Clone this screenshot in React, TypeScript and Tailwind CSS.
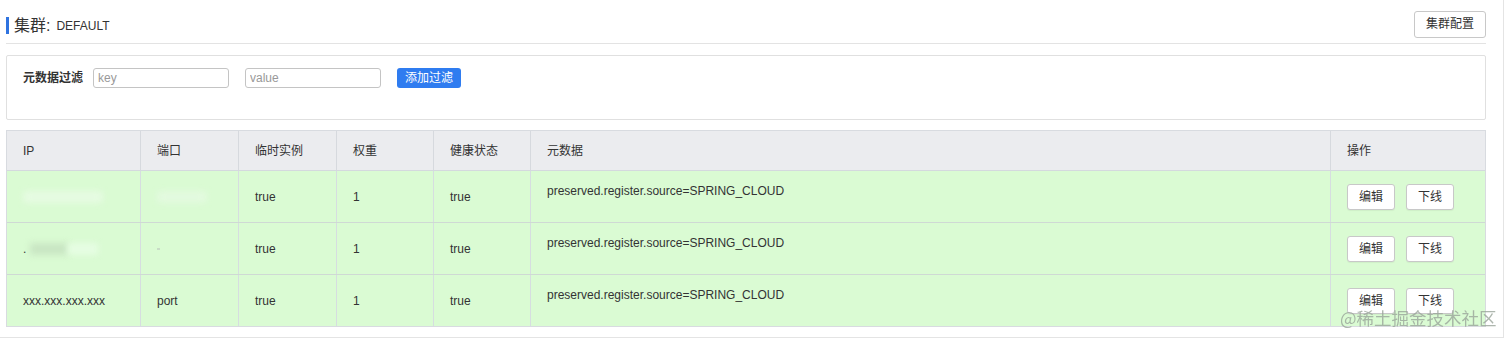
import React from "react";

const font = { fontFamily: '"Liberation Sans", "Noto Sans CJK SC", sans-serif' };

const cols = [
  { label: "IP", w: "w-[134px]" },
  { label: "端口", w: "w-[98px]" },
  { label: "临时实例", w: "w-[98px]" },
  { label: "权重", w: "w-[97px]" },
  { label: "健康状态", w: "w-[97px]" },
  { label: "元数据", w: "w-[800px]" },
  { label: "操作", w: "flex-1" },
];

function Btn({ children }: { children: React.ReactNode }) {
  return (
    <button className="h-[26px] w-[48px] rounded-[3px] border border-[#c8c8c8] bg-white text-[12px] text-[#333] shadow-[0_1px_1px_rgba(0,0,0,0.05)]">
      {children}
    </button>
  );
}

function Row({ ip, port, last }: { ip: React.ReactNode; port: React.ReactNode; last?: boolean }) {
  const cell = "border-r border-[#d6dde0] px-4 flex items-center";
  return (
    <div className={`flex bg-[#dafbd3] text-[12px] text-[#333] ${last ? "h-[51px]" : "h-[52px] border-b border-[#cfd9d4]"}`}>
      <div className={`${cell} w-[134px]`}>{ip}</div>
      <div className={`${cell} w-[98px]`}>{port}</div>
      <div className={`${cell} w-[98px]`}>true</div>
      <div className={`${cell} w-[97px]`}>1</div>
      <div className={`${cell} w-[97px]`}>true</div>
      <div className="w-[800px] border-r border-[#d6dde0] px-4 pt-[11px]">preserved.register.source=SPRING_CLOUD</div>
      <div className="flex flex-1 items-center gap-[11px] pl-[16px] pt-[1px]">
        <Btn>编辑</Btn>
        <Btn>下线</Btn>
      </div>
    </div>
  );
}

export default function App() {
  return (
    <div className="relative h-[342px] w-[1512px] overflow-hidden bg-white" style={font}>
      <div className="h-[338px] w-[1504px] border-b border-r border-[#e4e4e4] pl-[6px] pr-[17px]">
        <div className="flex h-[43px] items-center justify-between">
          <div className="flex items-center pt-[8px]">
            <div className="h-[17px] w-[3px] bg-[#2f73e0]" />
            <span className="ml-[5px] text-[16px] text-[#333]">集群:</span>
            <span className="ml-[6px] text-[12px] text-[#333]">DEFAULT</span>
          </div>
          <button className="mt-[5px] h-[27px] w-[72px] rounded-[3px] border border-[#c8c8c8] bg-white text-[12px] text-[#333]">
            集群配置
          </button>
        </div>
        <div className="h-px bg-[#e3e3e3]" />
        <div className="mt-[11px] h-[65px] rounded-[2px] border border-[#e0e0e0] px-[16px] pt-[12px]">
          <div className="flex items-center">
            <span className="w-[70px] text-[12px] font-bold text-[#333]">元数据过滤</span>
            <input
              placeholder="key"
              className="h-[20px] w-[136px] rounded-[3px] border border-[#c4c4c4] px-[4px] text-[12px] outline-none placeholder:text-[#999]"
            />
            <input
              placeholder="value"
              className="ml-[16px] h-[20px] w-[136px] rounded-[3px] border border-[#c4c4c4] px-[4px] text-[12px] outline-none placeholder:text-[#999]"
            />
            <button className="ml-[16px] h-[20px] w-[64px] rounded-[3px] bg-[#2f7cf0] text-[12px] text-white">
              添加过滤
            </button>
          </div>
        </div>
        <div className="mt-[10px] border border-[#d8dbe0]">
          <div className="flex h-[40px] border-b border-[#d4d9de] bg-[#ebecef] text-[12px] text-[#333]">
            {cols.map((c, i) => (
              <div
                key={c.label}
                className={`${c.w} flex items-center px-4 ${i < cols.length - 1 ? "border-r border-[#d6d9de]" : ""}`}
              >
                {c.label}
              </div>
            ))}
          </div>
          <Row
            ip={<span className="inline-block h-[12px] w-[80px] rounded bg-[#e6fbe2] blur-[3px]" />}
            port={<span className="inline-block h-[12px] w-[50px] rounded bg-[#e3fadf] blur-[3px]" />}
          />
          <Row
            ip={
              <span className="flex items-center">
                <span>.</span>
                <span className="ml-[4px] inline-block h-[12px] w-[38px] bg-[#c9e6c3] blur-[3px]" />
                <span className="inline-block h-[12px] w-[30px] bg-[#e6fde3] blur-[3px]" />
              </span>
            }
            port={<span className="inline-block h-[2px] w-[3px] bg-[#c8dcc6]" />}
          />
          <Row ip="xxx.xxx.xxx.xxx" port="port" last />
        </div>
      </div>
      <div
        className="absolute left-[1340px] top-[306px] whitespace-nowrap text-[17.5px] leading-[24px] text-[#9aa59a] opacity-80"
        style={{ fontFamily: '"Noto Sans CJK SC", sans-serif' }}
      >
        @稀土掘金技术社区
      </div>
    </div>
  );
}
